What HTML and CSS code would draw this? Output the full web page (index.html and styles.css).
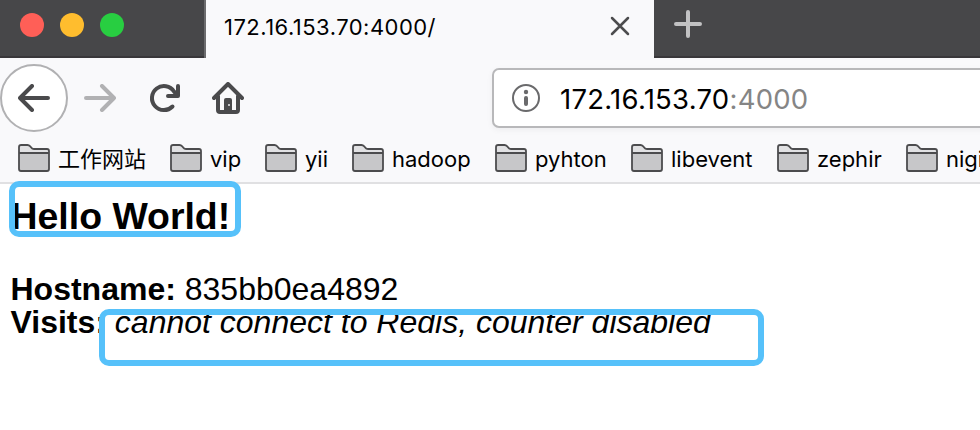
FILE: index.html
```html
<!DOCTYPE html>
<html lang="zh">
<head>
<meta charset="utf-8">
<title>172.16.153.70:4000/</title>
<link rel="stylesheet" href="styles.css">
</head>
<body>
<svg class="defs" width="0" height="0">
  <symbol id="folder" viewBox="0 0 32 28">
    <path d="M1 3.200Q1 1 3.200 1H9.500Q11 1 12 2.200L14.200 4.500Q15 5 16.200 5H29Q31 5 31 7V25Q31 27 29 27H3Q1 27 1 25Z" fill="#e1e1e3"/>
    <path d="M1 9H31V25Q31 27 29 27H3Q1 27 1 25Z" fill="#c7c7c9"/>
    <path d="M1 9H31M1 3.200Q1 1 3.200 1H9.500Q11 1 12 2.200L14.200 4.500Q15 5 16.200 5H29Q31 5 31 7V25Q31 27 29 27H3Q1 27 1 25Z" fill="none" stroke="#4c4c4e" stroke-width="1.800"/>
  </symbol>
</svg>
<header class="tabs">
  <div class="lights"><i class="light red"></i><i class="light yellow"></i><i class="light green"></i></div>
  <div class="tab">
    <span class="tab-title">172.16.153.70:4000/</span>
    <svg class="close" width="20" height="20" viewBox="0 0 20 20"><path d="M2 2L18 18M18 2L2 18" stroke="#4c4c4e" stroke-width="2.500" stroke-linecap="round"/></svg>
  </div>
  <svg class="plus" width="28" height="28" viewBox="0 0 28 28"><path d="M14 2V26M2 14H26" stroke="#c2c2c3" stroke-width="4" stroke-linecap="round"/></svg>
</header>
<nav class="toolbar">
  <div class="back"><svg width="32" height="28" viewBox="0 0 32 28"><path d="M30 14H2M14 2L2 14L14 26" fill="none" stroke="#4a4a4c" stroke-width="4" stroke-linecap="round" stroke-linejoin="round"/></svg></div>
  <svg class="forward" width="32" height="28" viewBox="0 0 32 28"><path d="M2 14H30M18 2L30 14L18 26" fill="none" stroke="#b1b1b3" stroke-width="4" stroke-linecap="round" stroke-linejoin="round"/></svg>
  <svg class="reload" width="32" height="30" viewBox="0 0 32 30"><path d="M23.500 23.500A12 12 0 1 1 25 8.500L28 12" fill="none" stroke="#4a4a4c" stroke-width="4" stroke-linecap="round"/><path d="M29 3V13H19" fill="none" stroke="#4a4a4c" stroke-width="4" stroke-linecap="round" stroke-linejoin="round"/></svg>
  <svg class="home" width="32" height="32" viewBox="0 0 32 32"><path d="M2 16L16 2L30 16M6 14V28Q6 30 8 30H24Q26 30 26 28V14" fill="none" stroke="#4a4a4c" stroke-width="4" stroke-linecap="round" stroke-linejoin="round"/><path d="M12 30V18Q12 16 14 16H18Q20 16 20 18V30Z" fill="#4a4a4c"/><rect x="16" y="22" width="2" height="2" fill="#c4c4c6"/></svg>
  <div class="url">
    <svg width="28" height="28" viewBox="0 0 28 28"><circle cx="14" cy="14" r="13" fill="none" stroke="#6a6a6c" stroke-width="2"/><circle cx="14" cy="8" r="2.200" fill="#6a6a6c"/><path d="M14 14V20" stroke="#6a6a6c" stroke-width="4" stroke-linecap="round"/></svg>
    <span class="address">172.16.153.70<span class="port">:4000</span></span>
  </div>
</nav>
<div class="bookmarks">
  <div class="mark"><svg><use href="#folder"/></svg><span>工作网站</span></div>
  <div class="mark"><svg><use href="#folder"/></svg><span>vip</span></div>
  <div class="mark"><svg><use href="#folder"/></svg><span>yii</span></div>
  <div class="mark"><svg><use href="#folder"/></svg><span>hadoop</span></div>
  <div class="mark"><svg><use href="#folder"/></svg><span>pyhton</span></div>
  <div class="mark"><svg><use href="#folder"/></svg><span>libevent</span></div>
  <div class="mark"><svg><use href="#folder"/></svg><span>zephir</span></div>
  <div class="mark"><svg><use href="#folder"/></svg><span>nigi</span></div>
</div>
<main class="page">
  <h3>Hello World!</h3>
  <p><b>Hostname:</b> 835bb0ea4892<br><b>Visits:</b> <i>cannot connect to Redis, counter disabled</i></p>
</main>
<div class="outline outline-title"></div>
<div class="outline outline-visits"></div>
</body>
</html>
```
FILE: styles.css
```css
* { box-sizing: border-box; }
body {
  position: relative;
  width: 980px;
  height: 430px;
  margin: 0;
  overflow: hidden;
  background: #fff;
  color: #000;
  font-family: Inter, "Noto Sans CJK SC", sans-serif;
}
svg { display: block; flex: none; }
.defs { position: absolute; }
.tabs {
  display: flex;
  height: 58px;
  background: linear-gradient(#474749 56px, #39373a 56px);
}
.lights {
  display: flex;
  gap: 16px;
  width: 206px;
  padding: 13px 0 0 20px;
  border-right: 2px solid #6c6c6e;
}
.light { width: 24px; height: 24px; border-radius: 50%; }
.red { background: #ff5f57; }
.yellow { background: #ffbd2e; }
.green { background: #28ce41; }
.tab {
  display: flex;
  justify-content: space-between;
  width: 448px;
  padding: 0 24px 0 18px;
  background: #f9f9fb;
}
.tab-title {
  font-size: 22px;
  line-height: 54px;
  letter-spacing: .47px;
  font-feature-settings: "calt" 0;
  white-space: nowrap;
}
.close { margin-top: 16px; }
.plus { margin: 10px 0 0 20px; }
.toolbar { display: flex; height: 78px; background: #f9f9fb; }
.back {
  display: flex;
  align-items: center;
  justify-content: center;
  width: 68px;
  height: 68px;
  margin-top: 6px;
  border: 2px solid #b1b1b3;
  border-radius: 50%;
  background: #fff;
}
.forward { margin: 26px 0 0 16px; }
.reload { margin: 25px 0 0 33px; }
.home { margin: 24px 0 0 31px; }
.url {
  display: flex;
  flex: 1;
  gap: 20px;
  height: 60px;
  margin: 10px -10px 0 248px;
  padding: 14px 0 0 18px;
  border: 2px solid #b8b8ba;
  border-radius: 7px;
  background: #fff;
  box-shadow: 0 2px 6px rgba(0, 0, 0, .05);
}
.address {
  font-size: 27.5px;
  line-height: 31px;
  letter-spacing: .25px;
  font-feature-settings: "calt" 0;
  white-space: nowrap;
}
.port { color: #858585; }
.bookmarks {
  display: grid;
  grid-template-columns: 152px 95px 87px 143px 136px 146px 129px 74px;
  height: 48px;
  padding-left: 18px;
  border-bottom: 2px solid #e0e0e2;
  background: #f9f9fb;
}
.mark { display: flex; gap: 8px; overflow: hidden; }
.mark svg { width: 32px; height: 28px; margin-top: 8px; }
.mark span { font-size: 22px; line-height: 46px; white-space: nowrap; }
.page { padding: 10px 10px 0 10.5px; font: 32px/33px "Liberation Sans", Arial, sans-serif; }
.page h3 { margin: 0; font-size: 37.44px; line-height: 44px; }
.page p { margin: 35px 0 0; }
.outline { position: absolute; border: 6px solid #56c1fa; border-radius: 10px; }
.outline-title { left: 9px; top: 181px; width: 232px; height: 56px; }
.outline-visits { left: 99px; top: 309px; width: 665px; height: 57px; }
```
